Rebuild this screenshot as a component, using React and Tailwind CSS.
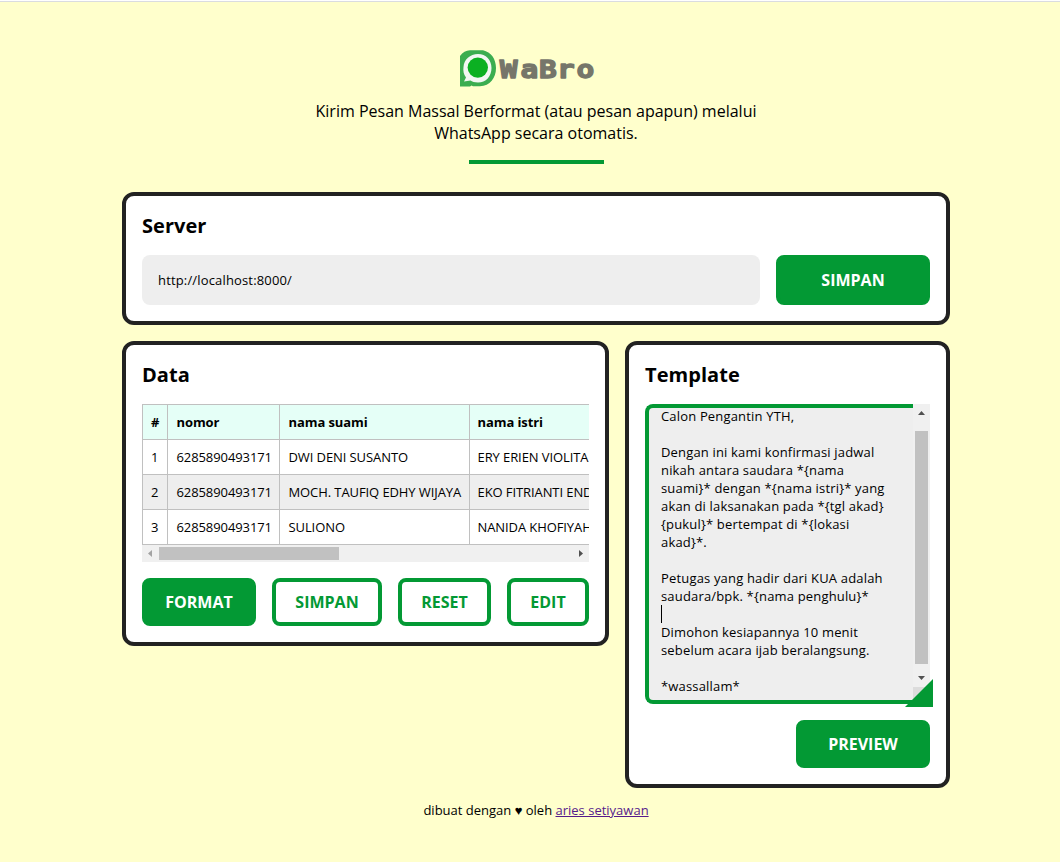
import React from "react";

const rows = [
  ["1", "6285890493171", "DWI DENI SUSANTO", "ERY ERIEN VIOLITA"],
  ["2", "6285890493171", "MOCH. TAUFIQ EDHY WIJAYA", "EKO FITRIANTI ENDAH"],
  ["3", "6285890493171", "SULIONO", "NANIDA KHOFIYAH"],
];

const lines = [
  "Calon Pengantin YTH,",
  "",
  "Dengan ini kami konfirmasi jadwal",
  "nikah antara saudara *{nama",
  "suami}* dengan *{nama istri}* yang",
  "akan di laksanakan pada *{tgl akad}",
  "{pukul}* bertempat di *{lokasi",
  "akad}*.",
  "",
  "Petugas yang hadir dari KUA adalah",
  "saudara/bpk. *{nama penghulu}*",
  null,
  "Dimohon kesiapannya 10 menit",
  "sebelum acara ijab beralangsung.",
  "",
  "*wassallam*",
];

function Card({ title, className, children }) {
  return (
    <section className={`rounded-xl border-4 border-[#222] bg-white p-4 ${className}`}>
      <h2 className="mb-4 text-[20px] font-bold leading-[27px] tracking-[0.05px]">{title}</h2>
      {children}
    </section>
  );
}

function Button({ outline, className, children }) {
  return (
    <button
      className={`flex shrink-0 items-center justify-center rounded-lg border-4 border-[#039934] text-[16px] font-bold ${
        outline ? "bg-white text-[#039934]" : "bg-[#039934] text-white"
      } ${className}`}
    >
      {children}
    </button>
  );
}

function Logo() {
  return (
    <svg width="154" height="38" viewBox="0 0 154 38" className="block">
      <path d="M1 6Q5 .5 11 .3H24C32 2 37 9 37 18C37 28 31 36 21 36.300H14L12.500 35.500L11 36.500H1Z" fill="#3bad50" />
      <path d="M19 4C27 4 32.500 10 32.500 18C32.500 26.500 27 32.500 19 32.500C15.500 32.500 13 31.500 11.500 30.500L5 31.500L7 27.500C4.500 24 4 21 4.500 17C5 9.500 11 4 19 4Z" fill="#f2f7f3" />
      <circle cx="18.800" cy="17.600" r="10.200" fill="#0bb022" />
      <text
        transform="scale(1.16 1)"
        x="35.1 53 69 84.4 101.3"
        y="27.700"
        fontFamily="'DejaVu Sans Mono', monospace"
        fontSize="25.500"
        fontWeight="700"
        fill="#76766a"
        stroke="#76766a"
        strokeWidth="1.300"
        strokeLinejoin="round"
      >
        WaBro
      </text>
    </svg>
  );
}

export default function App() {
  return (
    <div className="h-[862px] overflow-hidden border-t border-white bg-[#ffffcc] pl-[122px] pr-[110px] font-['Open_Sans',sans-serif] text-[13px] text-black">
      <div className="-ml-[122px] -mr-[110px] h-px bg-[#dadce0]" />
      <header className="flex flex-col items-center pt-12">
        <Logo />
        <p className="mt-3 text-center text-[16px] leading-[22px]">
          Kirim Pesan Massal Berformat (atau pesan apapun) melalui
          <br />
          WhatsApp secara otomatis.
        </p>
        <div className="mt-4 h-1 w-[135px] bg-[#039934]" />
      </header>

      <main className="mt-7 flex flex-col gap-4">
        <Card title="Server" className="h-[133px]">
          <div className="flex gap-4">
            <div className="flex h-[50px] flex-1 items-center rounded-lg bg-[#eee] px-4 pt-0.5 tracking-[0.16px]">
              http://localhost:8000/
            </div>
            <Button className="h-[50px] w-[154px]">SIMPAN</Button>
          </div>
        </Card>

        <div className="flex items-start gap-4">
          <Card title="Data" className="h-[305px] w-[487px]">
            <div className="overflow-hidden">
              <table className="w-[520px] table-fixed border-separate border-spacing-0 border-l border-t border-[#c0c0c0] tracking-[-0.09px]">
                <colgroup>
                  <col className="w-[25px]" />
                  <col className="w-[112px]" />
                  <col className="w-[190px]" />
                  <col />
                </colgroup>
                <thead>
                  <tr className="h-[35px] bg-[#e5fff7] text-left">
                    {["#", "nomor", "nama suami", "nama istri"].map((h) => (
                      <th key={h} className="whitespace-nowrap border-b border-r border-[#c0c0c0] pb-0 pl-[8.5px] pr-0 pt-0.5 font-bold first:pl-2 last:pl-[7.5px]">
                        {h}
                      </th>
                    ))}
                  </tr>
                </thead>
                <tbody>
                  {rows.map((r) => (
                    <tr key={r[0]} className="h-[35px] even:bg-[#eee]">
                      {r.map((c) => (
                        <td key={c} className="whitespace-nowrap border-b border-r border-[#c0c0c0] pb-0 pl-[8.5px] pr-0 pt-0.5 first:pl-2 last:pl-[7.5px]">
                          {c}
                        </td>
                      ))}
                    </tr>
                  ))}
                </tbody>
              </table>
            </div>
            <div className="flex h-[17px] items-center justify-between bg-[#f0f0f0]">
              <div className="flex items-center">
                <svg width="17" height="17"><path d="M10 5v7L6 8.500Z" fill="#a3a3a3" /></svg>
                <div className="h-[13px] w-[180px] bg-[#c1c1c1]" />
              </div>
              <svg width="17" height="17"><path d="M7 5v7L11 8.500Z" fill="#505050" /></svg>
            </div>
            <div className="mt-4 flex gap-4">
              <Button className="h-12 w-[114px]">FORMAT</Button>
              <Button outline className="h-12 w-[110px]">SIMPAN</Button>
              <Button outline className="h-12 w-[93px]">RESET</Button>
              <Button outline className="h-12 w-[82px]">EDIT</Button>
            </div>
          </Card>

          <Card title="Template" className="h-[447px] w-[325px]">
            <div className="relative flex h-[300px]">
              <div className="flex-1 overflow-hidden rounded-l-lg border-y-4 border-l-4 border-[#039934] bg-[#eee] pl-3 tracking-[0.17px]">
                <div className="-mt-px">
                  {lines.map((l, i) => (
                    <div key={i} className="h-[18px] whitespace-pre leading-[18px]">
                      {l === null ? <div className="h-[18px] w-px bg-black" /> : <span>{l}</span>}
                    </div>
                  ))}
                </div>
              </div>
              <div className="flex w-[17px] flex-col items-center bg-[#f0f0f0]">
                <svg width="17" height="27"><path d="M5 11h7L8.500 7Z" fill="#505050" /></svg>
                <div className="h-[233px] w-[13px] bg-[#c1c1c1]" />
                <svg width="17" height="23"><path d="M5 12h7L8.500 16Z" fill="#505050" /></svg>
                <div className="w-full flex-1 bg-[#dcdcdc]" />
              </div>
              <svg width="28" height="28" className="absolute -bottom-[3px] -right-[3px]">
                <path d="M28 0V28H0Z" fill="#039934" />
              </svg>
            </div>
            <div className="mt-4 flex justify-end">
              <Button className="h-12 w-[134px]">PREVIEW</Button>
            </div>
          </Card>
        </div>
      </main>

      <footer className="mt-[13px] text-center leading-[18px]">
        dibuat dengan ♥ oleh <a className="text-[#551a8b] underline">aries setiyawan</a>
      </footer>
    </div>
  );
}
